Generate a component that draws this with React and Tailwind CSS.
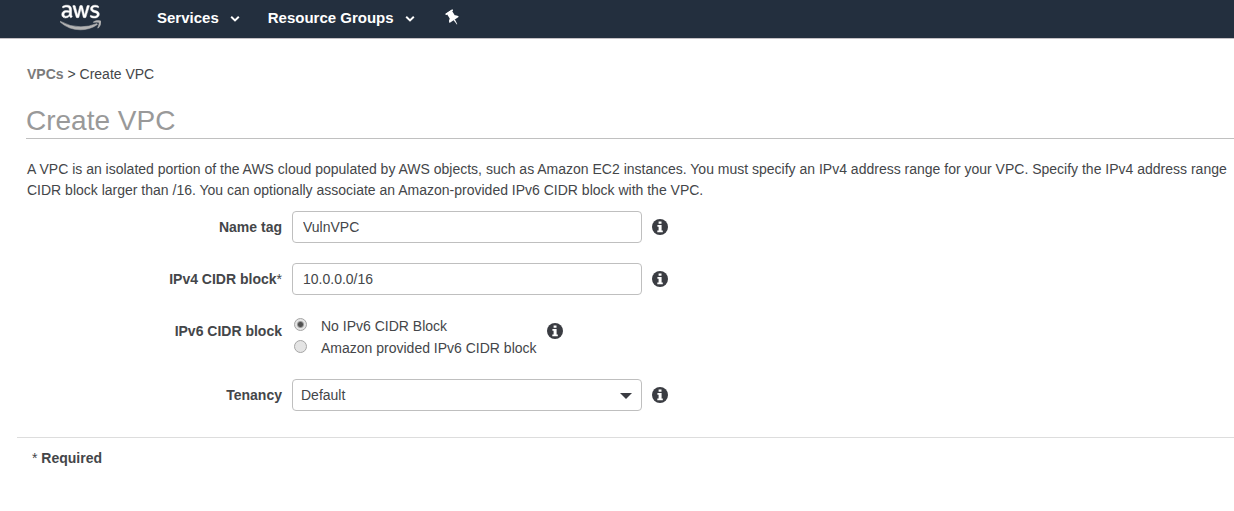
import { useState } from "react";
import { FaAws } from "react-icons/fa";

function Chevron() {
  return (
    <svg viewBox="0 0 10 8" className="h-2 w-[10px] translate-y-px" fill="none" stroke="currentColor" strokeWidth="2" aria-hidden="true">
      <path d="M1.2 1.8 5 5.4 8.8 1.8" />
    </svg>
  );
}

function Pin() {
  return (
    <svg viewBox="0 0 12 16" className="h-4 w-3 -rotate-[33deg]" fill="currentColor" aria-hidden="true">
      <path d="M2.6 0H9.4Q10.4 0 10.4 1T9.4 2H9V6.6Q11.6 8 11.6 10.2H.4Q.4 8 3 6.6V2H2.6Q1.6 2 1.6 1T2.6 0Z" />
      <path d="M5.2 10H6.9L6.3 15.5H5.8Z" />
    </svg>
  );
}

function Logo() {
  return (
    <a href="#home" aria-label="AWS" className="ml-[60px] block w-[41px] pt-px">
      <svg width="0" height="0" className="absolute" aria-hidden="true">
        <defs>
          <linearGradient id="aws-fill" gradientUnits="userSpaceOnUse" x1="0" y1="0" x2="0" y2="512">
            <stop offset="0.58" stopColor="#ffffff" />
            <stop offset="0.58" stopColor="#b3b3b3" />
          </linearGradient>
        </defs>
      </svg>
      <FaAws className="h-[33px] w-[41px] [&_path]:fill-[url(#aws-fill)] [&_path]:stroke-[url(#aws-fill)] [&_path]:[stroke-width:8]" />
    </a>
  );
}

function Header() {
  return (
    <header className="flex h-[39px] items-start border-b border-[#c4c0c4] bg-[#232f3e] text-white">
      <Logo />
      <nav className="ml-14 flex h-9 items-center text-[15px] font-bold">
        <button type="button" className="flex items-center gap-[11px]">
          Services
          <Chevron />
        </button>
        <button type="button" className="ml-7 flex items-center gap-[11px]">
          Resource Groups
          <Chevron />
        </button>
        <button type="button" aria-label="Pin" className="ml-8">
          <Pin />
        </button>
      </nav>
    </header>
  );
}

function Info({ label, className = "" }) {
  return (
    <button type="button" aria-label={label} className={className}>
      <svg viewBox="0 0 16 16" className="size-4" aria-hidden="true">
        <circle cx="8" cy="8" r="8" fill="#3a3c42" />
        <path
          d="M6.6 2.4H9.5V4.8H6.6ZM5.4 6H9.6V11.4H10.8V13.3H5.3V11.4H6.6V7.8H5.4Z"
          fill="#ffffff"
        />
      </svg>
    </button>
  );
}

const grid = "grid grid-cols-[282px_auto_1fr] items-center gap-x-[10px]";
const labelStyle = "text-right font-bold";
const field = "h-8 w-[350px] rounded border border-[#bfbfbf] bg-white";

function TextRow({ id, label, value, required }) {
  return (
    <div className={grid}>
      <label htmlFor={id} className={labelStyle}>
        {label}
        {required && <span className="font-normal">*</span>}
      </label>
      <input id={id} type="text" defaultValue={value} className={`${field} px-[10px]`} />
      <Info label={`About ${label}`} className="justify-self-start" />
    </div>
  );
}

function Radio({ children, checked, onChange }) {
  return (
    <label className="flex h-[22px] items-center gap-[14px]">
      <input
        type="radio"
        name="ipv6"
        checked={checked}
        onChange={onChange}
        className="mb-1 size-[13px] appearance-none rounded-full border border-[#a6a6a6] bg-[#e4e4e4] checked:bg-[radial-gradient(circle,#505050_0_2px,#e4e4e4_4px)]"
      />
      {children}
    </label>
  );
}

export default function App() {
  const [ipv6, setIpv6] = useState("none");
  return (
    <div className="overflow-x-hidden bg-white font-['Liberation_Sans',Arial,sans-serif] text-sm text-[#444649]">
      <Header />
      <main>
        <div className="pl-[26px]">
          <nav aria-label="Breadcrumb" className="pt-[25px] pl-px">
            <a href="#vpcs" className="font-bold text-[#7a7a7a]">VPCs</a> &gt; Create VPC
          </nav>
          <h1 className="mt-5 border-b border-[#c0c0c0] text-[28px] leading-[34px] text-[#999999]">
            Create VPC
          </h1>
          <p className="mt-5 pl-px leading-[21px]">
            A VPC is an isolated portion of the AWS cloud populated by AWS objects, such as Amazon EC2 instances. You must specify an IPv4 address range for your VPC. Specify the IPv4 address range CIDR block larger than /16. You can optionally associate an Amazon-provided IPv6 CIDR block with the VPC.
          </p>
        </div>
        <form className="mt-[10px] flex flex-col gap-5">
          <TextRow id="name" label="Name tag" value="VulnVPC" />
          <TextRow id="ipv4" label="IPv4 CIDR block" value="10.0.0.0/16" required />
          <div role="radiogroup" aria-labelledby="ipv6-label" className={`${grid} items-start`}>
            <span id="ipv6-label" className={`${labelStyle} pt-[6px]`}>IPv6 CIDR block</span>
            <div className="pl-[2px]">
              <Radio checked={ipv6 === "none"} onChange={() => setIpv6("none")}>No IPv6 CIDR Block</Radio>
              <Radio checked={ipv6 === "amazon"} onChange={() => setIpv6("amazon")}>Amazon provided IPv6 CIDR block</Radio>
            </div>
            <Info label="About IPv6 CIDR block" className="mt-2 self-start justify-self-start" />
          </div>
          <div className={grid}>
            <label htmlFor="tenancy" className={labelStyle}>Tenancy</label>
            <div className="relative">
              <select id="tenancy" defaultValue="Default" className={`${field} appearance-none px-2`}>
                <option>Default</option>
                <option>Dedicated</option>
              </select>
              <svg viewBox="0 0 12 6" className="pointer-events-none absolute top-[14px] right-[10px] h-[6px] w-3" fill="#3a3c42" aria-hidden="true">
                <path d="M0 0H12L6 6Z" />
              </svg>
            </div>
            <Info label="About Tenancy" className="justify-self-start" />
          </div>
        </form>
        <footer className="mt-[26px] ml-[17px] border-t border-[#dddddd] pt-[10px] pl-[15px]">
          * <strong>Required</strong>
        </footer>
      </main>
    </div>
  );
}
